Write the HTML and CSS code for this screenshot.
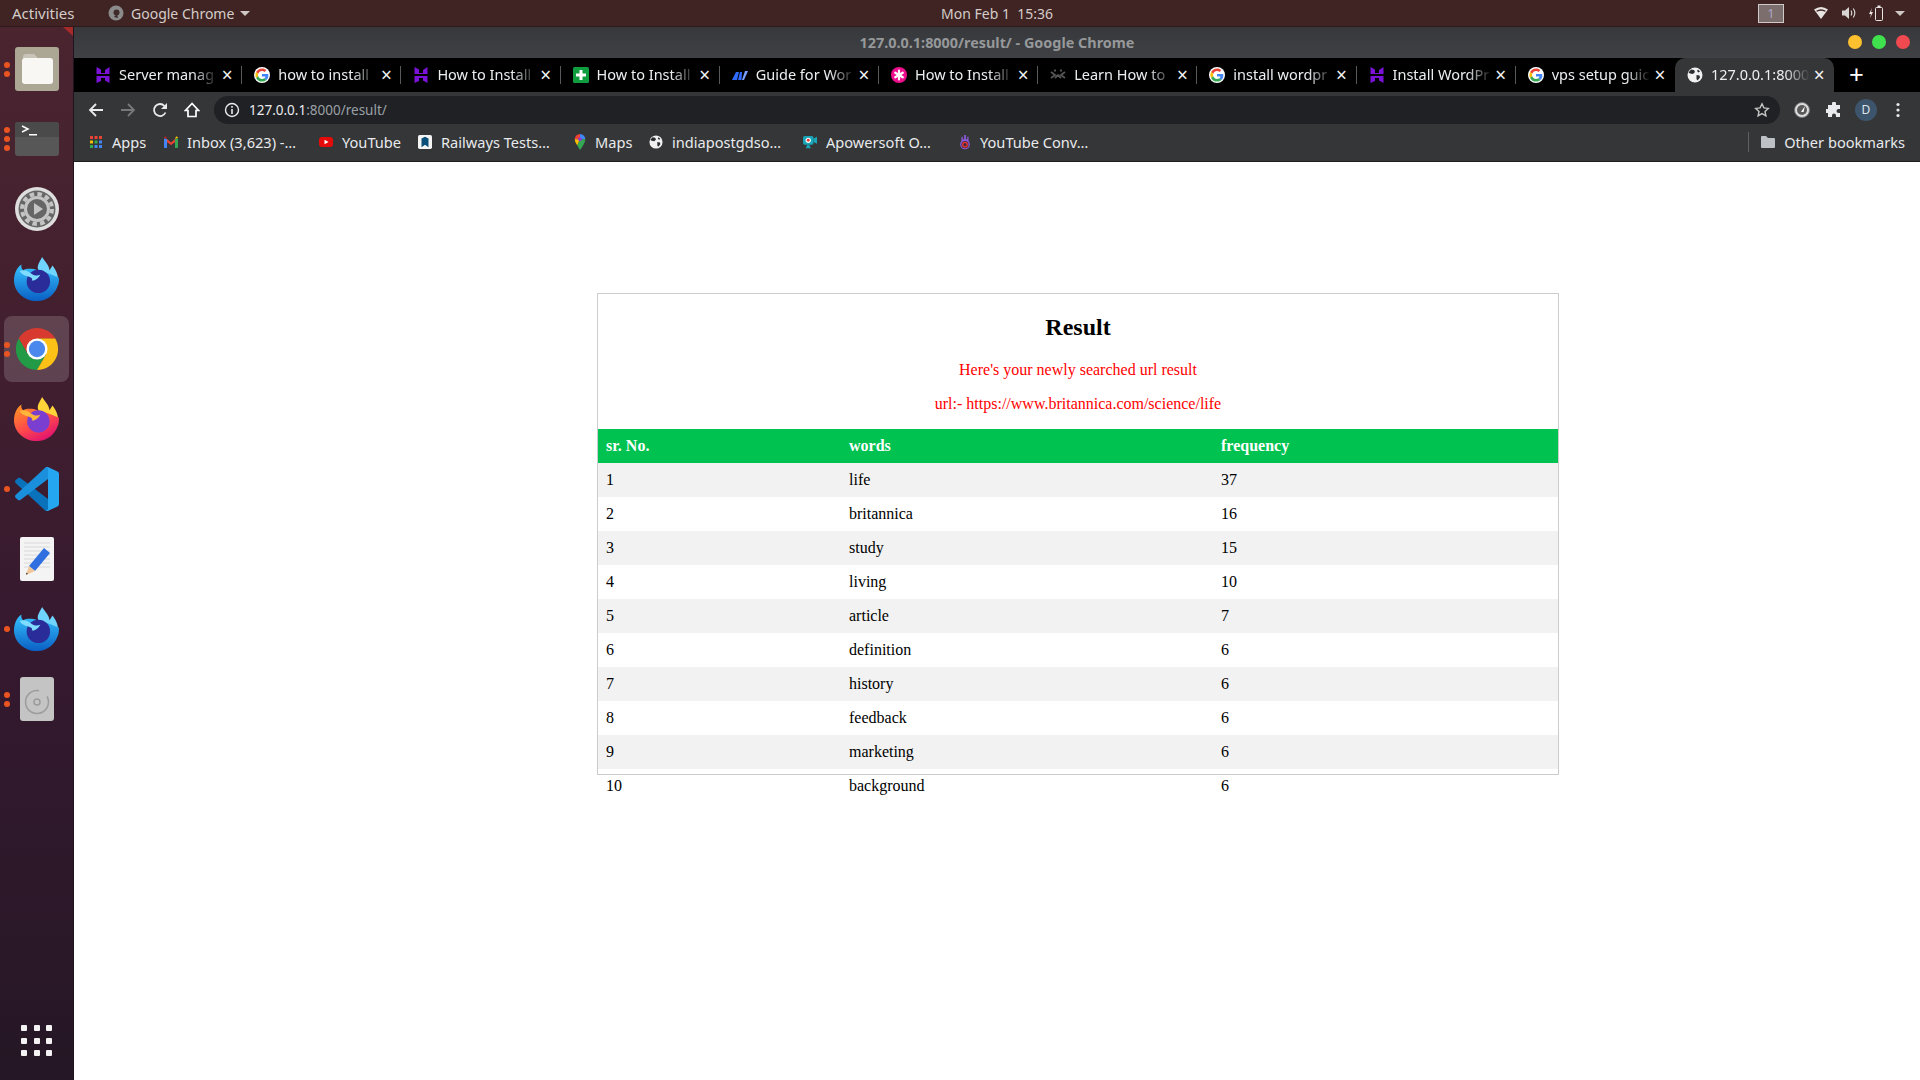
FILE: index.html
```html
<!DOCTYPE html>
<html lang="en">
<head>
<meta charset="utf-8">
<title>127.0.0.1:8000/result/ - Google Chrome</title>
<link rel="stylesheet" href="styles.css">
</head>
<body>
<svg class="defs" width="0" height="0" aria-hidden="true">
  <defs>
    <linearGradient id="tb" x1="0" y1="0" x2="0" y2="1"><stop offset="0" stop-color="#36c3ff"/><stop offset="1" stop-color="#0a5fc4"/></linearGradient>
    <linearGradient id="ff" x1="0" y1="0" x2="0.6" y2="1"><stop offset="0" stop-color="#ff9a1f"/><stop offset="0.6" stop-color="#ff4a4a"/><stop offset="1" stop-color="#e3156f"/></linearGradient>
    <symbol id="hostinger" viewBox="0 0 16 16"><path fill="#7a12d8" d="M1.500 0l4.500 2.500V6h4V3l4.500-3v7H1.500zM1.500 9h13v7L10 13.500V11H6v3l-4.500 2z"/></symbol>
    <symbol id="google" viewBox="-5 -5 58 58">
      <circle cx="24" cy="24" r="29" fill="#fff"/>
      <path fill="#ea4335" d="M24 9.500c3.540 0 6.710 1.220 9.210 3.600l6.850-6.850C35.900 2.380 30.470 0 24 0 14.620 0 6.510 5.380 2.560 13.220l7.980 6.190C12.430 13.720 17.740 9.500 24 9.500z"/>
      <path fill="#4285f4" d="M46.980 24.550c0-1.570-.15-3.090-.38-4.550H24v9.020h12.940c-.58 2.960-2.260 5.480-4.780 7.180l7.730 6c4.510-4.180 7.090-10.360 7.090-17.650z"/>
      <path fill="#fbbc05" d="M10.530 28.590c-.48-1.450-.76-2.990-.76-4.590s.27-3.140.76-4.590l-7.980-6.190C.92 16.460 0 20.120 0 24c0 3.880.92 7.540 2.560 10.780l7.970-6.190z"/>
      <path fill="#34a853" d="M24 48c6.480 0 11.930-2.130 15.890-5.810l-7.730-6c-2.150 1.450-4.920 2.300-8.160 2.300-6.260 0-11.570-4.220-13.470-9.910l-7.980 6.190C6.510 42.620 14.620 48 24 48z"/>
    </symbol>
    <symbol id="plus" viewBox="0 0 16 16"><rect width="16" height="16" rx="1.500" fill="#0f9d3f"/><path fill="#fff" d="M6.500 3h3v3.500H13v3H9.500V13h-3V9.500H3v-3h3.500z"/></symbol>
    <symbol id="wave" viewBox="0 0 16 16"><path fill="#2f6bff" d="M0 13L4 5h3L5 13zM6 13l2-8h2L9.500 13z"/><path fill="#7aa0ff" d="M10 13l3-9h3l-4 9z"/></symbol>
    <symbol id="star" viewBox="0 0 16 16"><circle cx="8" cy="8" r="8" fill="#ee0f8c"/><path stroke="#fff" stroke-width="2.200" stroke-linecap="round" d="M8 3.500v9M4.200 5.700l7.600 4.600M11.800 5.700l-7.600 4.600"/></symbol>
    <symbol id="xx" viewBox="0 0 16 16"><path stroke="#555" stroke-width="1.800" fill="none" d="M1 5l4 3-4 3M15 5l-4 3 4 3M5 11l3-3 3 3"/><path fill="#555" d="M4 2.500h2v2H4zM10 2.500h2v2h-2z"/></symbol>
    <symbol id="globe" viewBox="0 0 16 16"><circle cx="8" cy="8" r="7.500" fill="#f1f1f1"/><path fill="#2b2c2f" d="M4 2.500l3 .5 1 2-2 2-3-.5-1.500-1zM9.500 8l3 .5.500 2-2.500 3-1-1.500zM11 2.500l2 2-1.500 1L10 4z"/></symbol>
  </defs>
</svg>

<header class="topbar">
  <div class="top-left">
    <span class="activities">Activities</span>
    <span class="app-menu">
      <svg class="app-icon" viewBox="0 0 16 16"><circle cx="8" cy="8" r="7.500" fill="#8b8b8b"/><circle cx="8.500" cy="7.500" r="3" fill="#3f2a2a"/><path d="M6 12l3-3 1 4z" fill="#3f2a2a"/></svg>
      Google Chrome
      <i class="caret"></i>
    </span>
  </div>
  <div class="clock">Mon Feb 1&nbsp;&nbsp;15:36</div>
  <div class="tray">
    <span class="workspace">1</span>
    <svg class="tray-wifi" viewBox="0 0 16 14"><path fill="#e8e4e2" d="M1 3.500Q8-1.500 15 3.500L8 13z"/><path fill="#3f2424" d="M3.200 4.800Q8 1.800 12.800 4.800l-.8 1Q8 3.600 4 5.800z"/></svg>
    <svg class="tray-vol" viewBox="0 0 16 14"><path fill="#d8d4d2" d="M1 4.500h3l4-3.500v12L4 9.500H1z"/><path fill="none" stroke="#d8d4d2" stroke-width="1.200" d="M10 4.500q1.500 2.500 0 5M12.300 2.500q3 4.500 0 9"/></svg>
    <svg class="tray-bat" viewBox="0 0 16 16"><path fill="#e8e4e2" d="M3 3L0 9h2l-1 4 3-6H2z"/><rect x="6.500" y="2.500" width="7" height="13" rx="1" fill="none" stroke="#e8e4e2"/><rect x="8.500" y="0.500" width="3" height="2" fill="#e8e4e2"/></svg>
    <i class="caret tray-caret"></i>
  </div>
</header>

<div class="desktop">
  <nav class="dock">
    <span class="dock-notch"></span>
    <div class="dock-list">
      <div class="dock-item">
        <span class="pips"><i></i><i></i></span>
        <svg class="ico-44" viewBox="0 0 44 44"><rect width="44" height="44" rx="3" fill="#aca695"/><path fill="#c8c4b8" d="M8 10q0-3 3-3h8l4 4v6H8z"/><rect x="7" y="11" width="31" height="26" rx="3" fill="#f8f7f4"/></svg>
      </div>
      <div class="dock-item">
        <span class="pips"><i></i><i></i><i></i></span>
        <svg class="ico-term" viewBox="0 0 44 34"><rect width="44" height="34" rx="3" fill="#575757"/><path d="M3 0h38q3 0 3 3v12H0V3q0-3 3-3z" fill="#4a4a4a"/><path d="M7 4l6 3-6 3" fill="none" stroke="#fff" stroke-width="1.500"/><rect x="14" y="12" width="8" height="1.500" fill="#fff"/></svg>
      </div>
      <div class="dock-item">
        <svg class="ico-44" viewBox="0 0 44 44"><circle cx="22" cy="22" r="22" fill="#dedede"/><circle cx="22" cy="22" r="18.500" fill="#666"/><circle cx="22" cy="22" r="15" fill="none" stroke="#c4c4c4" stroke-width="4" stroke-dasharray="4.500 3.350"/><circle cx="22" cy="22" r="11.500" fill="#666" stroke="#c4c4c4" stroke-width="3"/><path d="M19 16l9 6-9 6z" fill="#c4c4c4"/></svg>
      </div>
      <div class="dock-item">
        <svg class="ico-45" viewBox="0 0 48 48">
          <path fill="#6fd4ff" d="M30 0C27 6 24 9 26 14L47 30C48 22 46 15 41 9 40 11 39 12 38 14 37 8 33 5 30 0z"/>
          <path fill="url(#tb)" d="M24 47C11 47 0 37 0 25 0 18 3 11 8 8c-.7 3 .3 5 2 6 3-2 10-2 15 0 8 2 14 4 23 8 0 15-11 25-24 25z"/>
          <circle cx="26" cy="26" r="12.500" fill="#2a2c99"/>
          <path fill="#7fdcff" d="M6 15c5-2 9 0 13 3 3 2 6 2 9 1-2 4-6 7-9 6 1-2 0-3-3-4-4-1-8-2-10-6z"/>
        </svg>
      </div>
      <div class="dock-item is-active">
        <span class="pips"><i></i><i></i></span>
        <svg class="ico-46" viewBox="0 0 48 48">
          <path fill="#d93a2f" d="M4.950 13A22 22 0 0 1 43.050 13H24L14.500 29.500z"/>
          <path fill="#229a46" d="M4.950 13A22 22 0 0 0 24 46L33.500 29.500H14.500z"/>
          <path fill="#fbc117" d="M43.050 13H24L33.500 29.500 24 46A22 22 0 0 0 43.050 13z"/>
          <circle cx="24" cy="24" r="11" fill="#fff"/><circle cx="24" cy="24" r="8.500" fill="#4a88ee"/>
        </svg>
      </div>
      <div class="dock-item">
        <svg class="ico-45" viewBox="0 0 48 48">
          <path fill="#ffd53a" d="M30 0C27 6 24 9 26 14L47 30C48 22 46 15 41 9 40 11 39 12 38 14 37 8 33 5 30 0z"/>
          <path fill="url(#ff)" d="M24 47C11 47 0 37 0 25 0 18 3 11 8 8c-.7 3 .3 5 2 6 3-2 10-2 15 0 8 2 14 4 23 8 0 15-11 25-24 25z"/>
          <circle cx="26" cy="26" r="12" fill="#7a3fd0"/>
          <path fill="#ffb43a" d="M6 15c5-2 9 0 13 3 3 2 6 2 9 1-2 4-6 7-9 6 1-2 0-3-3-4-4-1-8-2-10-6z"/>
        </svg>
      </div>
      <div class="dock-item">
        <span class="pips"><i></i></span>
        <svg class="ico-44" viewBox="0 0 100 100">
          <path fill="#0a72ba" d="M1.400 30.300l5.500-5.100c1.500-1.300 3.700-1.400 5.300-.2L75 72.700V99.800c-2.400 1-5 .6-7-1.300L1.400 36.300c-1.800-1.600-1.800-4.400 0-6z"/>
          <path fill="#1a8fdc" d="M1.400 69.700l5.500 5.100c1.500 1.300 3.700 1.400 5.300.2L75 27.300V.2C72.600-.8 70 .3 68 2L1.400 63.700c-1.800 1.600-1.800 4.400 0 6z"/>
          <path fill="#24a6f0" d="M71 99.500c1.700.7 3.400.6 5-.1l20.500-9.900c2.200-1 3.500-3.100 3.500-5.500V16c0-2.400-1.400-4.500-3.500-5.500L76 .6C74.400-.1 72.700-.2 71 .5 73.600 1.500 75 3 75 6v88c0 3-1.400 4.500-4 5.500z"/>
        </svg>
      </div>
      <div class="dock-item">
        <svg class="ico-doc" viewBox="0 0 34 44"><rect width="34" height="44" rx="2" fill="#f4f4f4"/><path stroke="#d8d8d8" d="M4 6h26M4 10h26M4 14h26M4 18h26M4 22h26M4 26h26M4 30h26"/><path fill="#2f6fe0" d="M24 11l6 5-15 18-6-5z"/><path fill="#f1c79a" d="M9 29l6 5-9 4z"/><path fill="#333" d="M6.500 35.500l1.500 1.300-2 1z"/></svg>
      </div>
      <div class="dock-item">
        <span class="pips"><i></i></span>
        <svg class="ico-45" viewBox="0 0 48 48">
          <path fill="#6fd4ff" d="M30 0C27 6 24 9 26 14L47 30C48 22 46 15 41 9 40 11 39 12 38 14 37 8 33 5 30 0z"/>
          <path fill="url(#tb)" d="M24 47C11 47 0 37 0 25 0 18 3 11 8 8c-.7 3 .3 5 2 6 3-2 10-2 15 0 8 2 14 4 23 8 0 15-11 25-24 25z"/>
          <circle cx="26" cy="26" r="12.500" fill="#2a2c99"/>
          <path fill="#7fdcff" d="M6 15c5-2 9 0 13 3 3 2 6 2 9 1-2 4-6 7-9 6 1-2 0-3-3-4-4-1-8-2-10-6z"/>
        </svg>
      </div>
      <div class="dock-item">
        <span class="pips"><i></i><i></i></span>
        <svg class="ico-doc" viewBox="0 0 34 44"><rect width="34" height="44" rx="3" fill="#c4c4c4"/><circle cx="17" cy="25" r="11.500" fill="none" stroke="#9c9c9c" stroke-width="1.500" stroke-dasharray="56 10"/><circle cx="17" cy="25" r="3" fill="none" stroke="#9c9c9c" stroke-width="1.500"/></svg>
      </div>
    </div>
    <div class="app-grid"><i></i><i></i><i></i><i></i><i></i><i></i><i></i><i></i><i></i></div>
  </nav>

  <div class="browser">
    <div class="titlebar">
      <span class="win-title">127.0.0.1:8000/result/ - Google Chrome</span>
      <span class="win-controls"><i class="wc wc-y"></i><i class="wc wc-g"></i><i class="wc wc-r"></i></span>
    </div>

    <div class="tabstrip">
      <div class="tab"><svg class="fav"><use href="#hostinger"/></svg><span class="tab-title">Server manag</span><span class="tab-x">×</span></div>
      <div class="tab"><svg class="fav"><use href="#google"/></svg><span class="tab-title">how to install</span><span class="tab-x">×</span></div>
      <div class="tab"><svg class="fav"><use href="#hostinger"/></svg><span class="tab-title">How to Install</span><span class="tab-x">×</span></div>
      <div class="tab"><svg class="fav"><use href="#plus"/></svg><span class="tab-title">How to Install</span><span class="tab-x">×</span></div>
      <div class="tab"><svg class="fav"><use href="#wave"/></svg><span class="tab-title">Guide for Wor</span><span class="tab-x">×</span></div>
      <div class="tab"><svg class="fav"><use href="#star"/></svg><span class="tab-title">How to Install</span><span class="tab-x">×</span></div>
      <div class="tab"><svg class="fav"><use href="#xx"/></svg><span class="tab-title">Learn How to</span><span class="tab-x">×</span></div>
      <div class="tab"><svg class="fav"><use href="#google"/></svg><span class="tab-title">install wordpr</span><span class="tab-x">×</span></div>
      <div class="tab"><svg class="fav"><use href="#hostinger"/></svg><span class="tab-title">Install WordPr</span><span class="tab-x">×</span></div>
      <div class="tab tab-prev"><svg class="fav"><use href="#google"/></svg><span class="tab-title">vps setup guic</span><span class="tab-x">×</span></div>
      <div class="tab tab-active"><svg class="fav"><use href="#globe"/></svg><span class="tab-title">127.0.0.1:8000</span><span class="tab-x">×</span></div>
      <span class="new-tab">+</span>
    </div>

    <div class="toolbar">
      <div class="nav-btns">
        <svg class="tool" viewBox="0 0 16 16"><path fill="none" stroke="#e8eaed" stroke-width="1.800" d="M15 8H2M8 2L2 8l6 6"/></svg>
        <svg class="tool" viewBox="0 0 16 16"><path fill="none" stroke="#77787a" stroke-width="1.800" d="M1 8h13M8 2l6 6-6 6"/></svg>
        <svg class="tool" viewBox="0 0 16 16"><path fill="none" stroke="#e8eaed" stroke-width="1.800" d="M13.500 10.500A6 6 0 1 1 12.500 4"/><path fill="#e8eaed" d="M15 1v6H9z"/></svg>
        <svg class="tool" viewBox="0 0 16 16"><path fill="none" stroke="#fff" stroke-width="1.700" d="M8 1.500L1.500 8.500h2.500V14.500h8V8.500h2.500z"/></svg>
      </div>
      <div class="omnibox">
        <svg class="omni-info" viewBox="0 0 16 16"><circle cx="8" cy="8" r="6.500" fill="none" stroke="#e8eaed" stroke-width="1.400"/><path stroke="#e8eaed" stroke-width="1.600" d="M8 7v5M8 4v1.800"/></svg>
        <span class="url"><b>127.0.0.1</b>:8000/result/</span>
        <svg class="omni-star" viewBox="0 0 16 16"><path fill="none" stroke="#c4c7c5" stroke-width="1.400" d="M8 1.800l1.900 4.100 4.400.5-3.300 3 .9 4.400L8 11.600l-3.900 2.200.9-4.400-3.300-3 4.400-.5z"/></svg>
      </div>
      <div class="ext-btns">
        <svg class="tool" viewBox="0 0 16 16"><circle cx="8" cy="8" r="7.500" fill="#dcdcdc" stroke="#777"/><circle cx="8" cy="8" r="5" fill="#5b5b5b"/><path d="M7 10l4-6-1.500 6z" fill="#fff"/></svg>
        <svg class="tool" viewBox="0 0 16 16"><path fill="#e8eaed" d="M6 1.500a2 2 0 0 1 4 0V3h4v4h-1.500a2 2 0 0 0 0 4H14v4H10v-1.500a2 2 0 0 0-4 0V15H2v-4H.5a2 2 0 0 1 0-4H2V3h4z"/></svg>
        <span class="avatar">D</span>
        <svg class="tool" viewBox="0 0 16 16"><circle cx="8" cy="2.500" r="1.600" fill="#e8eaed"/><circle cx="8" cy="8" r="1.600" fill="#e8eaed"/><circle cx="8" cy="13.500" r="1.600" fill="#e8eaed"/></svg>
      </div>
    </div>

    <div class="bookmarks">
      <div class="bm bm-apps"><svg class="bm-ico" viewBox="0 0 14 14"><path fill="#ea4335" d="M1 1h3v3H1zM5.500 1h3v3h-3zM10 1h3v3h-3z"/><path fill="#fbbc05" d="M1 5.500h3v3H1z"/><path fill="#34a853" d="M5.500 5.500h3v3h-3zM1 10h3v3H1z"/><path fill="#4285f4" d="M10 5.500h3v3h-3zM5.500 10h3v3h-3zM10 10h3v3h-3z"/></svg>Apps</div>
      <div class="bm bm-inbox"><svg class="bm-ico" viewBox="0 0 14 12"><path fill="#ea4335" d="M3 3L7 6.500 11 3 12 5.500 7 9 2 5.500z"/><path fill="#4285f4" d="M0 2.500L3 3v9H1q-1 0-1-1z"/><path fill="#34a853" d="M14 2.500L11 3v9h2q1 0 1-1z"/><path fill="#fbbc05" d="M11 3l3-1q0-2-2-1.500z"/><path fill="#c5221f" d="M3 3L0 2q0-2 2-1.500z"/></svg>Inbox (3,623) -…</div>
      <div class="bm bm-yt"><svg class="bm-ico" viewBox="0 0 14 12"><rect y="1" width="14" height="10" rx="3" fill="#e60b0b"/><path fill="#fff" d="M5.500 3.800L9.500 6l-4 2.200z"/></svg>YouTube</div>
      <div class="bm bm-rail"><svg class="bm-ico" viewBox="0 0 16 16"><rect width="16" height="16" rx="2" fill="#f4f4f4"/><path fill="#0a4f7a" d="M4 14V4l4-2 4 2v10l-4-3z"/></svg>Railways Tests…</div>
      <div class="bm bm-maps"><svg class="bm-ico-sm" viewBox="0 0 12 18"><path fill="#4285f4" d="M6 0a6 6 0 0 1 6 6L6 6z"/><path fill="#ea4335" d="M6 0a6 6 0 0 0-6 6l6 0z"/><path fill="#fbbc05" d="M0 6q0 3 3 7l3-7z"/><path fill="#34a853" d="M12 6q0 4-6 12l-3-5 3-7z"/><circle cx="6" cy="6" r="2.200" fill="#8e3bd0"/></svg>Maps</div>
      <div class="bm bm-post"><svg class="bm-ico"><use href="#globe"/></svg>indiapostgdso…</div>
      <div class="bm bm-apow"><svg class="bm-ico" viewBox="0 0 16 16"><rect x="0" y="1" width="12" height="10" rx="2" fill="#18a5b8"/><path fill="#18a5b8" d="M12 4l4-2v8l-4-2zM5 11h2l2 4H3z"/><circle cx="6" cy="6" r="3" fill="#fff"/><circle cx="6" cy="6" r="1.600" fill="#e33"/></svg>Apowersoft O…</div>
      <div class="bm bm-conv"><svg class="bm-ico-sm" viewBox="0 0 12 18"><path fill="#8a5ad8" d="M2 8V3h1.500v3H5V1h2v5h1.500V3H10v5a5.500 5.500 0 1 1-8 0z"/><circle cx="6" cy="12" r="4" fill="#3a2a3a"/><circle cx="6" cy="12" r="2.500" fill="none" stroke="#e33" stroke-width="1.500"/></svg>YouTube Conv…</div>
      <div class="bm-other"><span class="bm-sep"></span><svg class="bm-ico" viewBox="0 0 14 12"><path fill="#bdc1c6" d="M0 1q0-1 1-1h4l2 2h6q1 0 1 1v8q0 1-1 1H1q-1 0-1-1z"/></svg>Other bookmarks</div>
    </div>

    <main class="page">
      <section class="card">
        <h2>Result</h2>
        <p>Here's your newly searched url result</p>
        <p>url:- https://www.britannica.com/science/life</p>
        <table>
          <thead>
            <tr><th class="col-a">sr. No.</th><th class="col-b">words</th><th>frequency</th></tr>
          </thead>
          <tbody>
            <tr><td>1</td><td>life</td><td>37</td></tr>
            <tr><td>2</td><td>britannica</td><td>16</td></tr>
            <tr><td>3</td><td>study</td><td>15</td></tr>
            <tr><td>4</td><td>living</td><td>10</td></tr>
            <tr><td>5</td><td>article</td><td>7</td></tr>
            <tr><td>6</td><td>definition</td><td>6</td></tr>
            <tr><td>7</td><td>history</td><td>6</td></tr>
            <tr><td>8</td><td>feedback</td><td>6</td></tr>
            <tr><td>9</td><td>marketing</td><td>6</td></tr>
            <tr><td>10</td><td>background</td><td>6</td></tr>
          </tbody>
        </table>
      </section>
    </main>
  </div>
</div>
</body>
</html>
```
FILE: styles.css
```css
* { box-sizing: border-box; }
html, body { margin: 0; height: 100%; }
body { width: 1920px; height: 1080px; overflow: hidden; display: flex; flex-direction: column; font-family: "Noto Sans", sans-serif; background: #fff; }
.defs { position: absolute; }

.topbar { height: 27px; flex: none; background: #3f2423; color: #d4ccc8; font-size: 14px; display: flex; align-items: center; border-bottom: 1px solid #2e1a1a; }
.top-left { width: 941px; display: flex; align-items: center; padding-left: 12px; flex: none; }
.activities { width: 96px; font-size: 15px; }
.app-menu { display: flex; align-items: center; gap: 6px; }
.app-icon { width: 16px; height: 16px; margin-right: 1px; }
.caret { display: inline-block; width: 0; height: 0; border-left: 5px solid transparent; border-right: 5px solid transparent; border-top: 5px solid #cfc8c4; }
.clock { width: 112px; text-align: center; white-space: nowrap; flex: none; font-size: 14px; }
.tray { flex: 1; display: flex; align-items: center; padding-left: 705px; }
.workspace { width: 26px; height: 19px; background: #7d6e6e; border: 1px solid #cfcaca; color: #a7a7c0; font-size: 13px; text-align: center; line-height: 17px; flex: none; }
.tray-wifi { width: 16px; height: 14px; margin-left: 29px; flex: none; }
.tray-vol { width: 16px; height: 14px; margin-left: 12px; flex: none; }
.tray-bat { width: 16px; height: 16px; margin-left: 12px; flex: none; }
.tray-caret { margin-left: 10px; flex: none; }

.desktop { flex: 1; display: flex; min-height: 0; }

.dock { width: 74px; flex: none; position: relative; background: linear-gradient(180deg, #4a2530 0%, #44202f 25%, #35192f 60%, #251725 100%); border-right: 1px solid #1e1420; display: flex; flex-direction: column; justify-content: space-between; padding: 7px 0 24px; }
.dock-notch { position: absolute; right: 0; top: 0; width: 0; height: 0; border-top: 9px solid #a52a2a; border-left: 10px solid transparent; }
.dock-item { height: 70px; display: flex; align-items: center; justify-content: center; position: relative; }
.is-active::before { content: ""; position: absolute; left: 4px; right: 4px; top: 2px; bottom: 2px; background: rgba(255,255,255,.16); border-radius: 8px; }
.pips { position: absolute; left: 4px; top: 0; bottom: 0; display: flex; flex-direction: column; justify-content: center; gap: 3px; z-index: 1; }
.pips i { display: block; width: 6px; height: 6px; border-radius: 50%; background: #e95420; }
.ico-44 { width: 44px; height: 44px; position: relative; }
.ico-45 { width: 45px; height: 45px; position: relative; }
.ico-46 { width: 46px; height: 46px; position: relative; }
.ico-term { width: 44px; height: 34px; }
.ico-doc { width: 34px; height: 44px; }
.app-grid { display: grid; grid-template-columns: repeat(3, 6px); gap: 6.500px; justify-content: center; }
.app-grid i { display: block; width: 6px; height: 6px; background: #f4f2f2; border-radius: 1px; }

.browser { flex: 1; min-width: 0; display: flex; flex-direction: column; }
.titlebar { height: 31px; flex: none; background: linear-gradient(180deg, #36383b, #3f4145); display: flex; align-items: center; justify-content: center; position: relative; }
.win-title { font-size: 14.400px; font-weight: 700; color: #96989a; }
.win-controls { position: absolute; right: 10px; top: 8px; display: flex; gap: 10px; }
.wc { display: block; width: 14px; height: 14px; border-radius: 50%; }
.wc-y { background: #fdc12f; }
.wc-g { background: #3fe24c; }
.wc-r { background: #f0494f; }

.tabstrip { height: 34px; flex: none; background: #000; display: flex; align-items: stretch; padding-left: 9px; }
.tab { width: 159.200px; flex: none; display: flex; align-items: center; padding: 0 7px 0 12px; color: #eceef0; font-size: 14.500px; position: relative; }
.tab::after { content: ""; position: absolute; right: 0; top: 8px; bottom: 8px; width: 1px; background: #58595c; }
.tab-prev::after, .tab-active::after { display: none; }
.tab-active { background: #353637; border-radius: 10px 10px 0 0; }
.fav { width: 16px; height: 16px; flex: none; }
.tab-title { flex: 1; min-width: 0; margin-left: 8px; padding-bottom: 2px; white-space: nowrap; overflow: hidden; -webkit-mask-image: linear-gradient(90deg, #000 75%, transparent 100%); mask-image: linear-gradient(90deg, #000 75%, transparent 100%); }
.tab-x { width: 16px; flex: none; margin-left: 1px; text-align: center; font-size: 19px; line-height: 18px; color: #f1f3f4; }
.new-tab { margin-left: 15px; color: #fff; font-size: 26px; line-height: 32px; font-weight: 400; }

.toolbar { height: 32px; flex: none; background: #353637; display: flex; align-items: flex-end; }
.nav-btns { width: 140px; height: 28px; flex: none; display: flex; align-items: center; gap: 16px; padding-left: 14px; }
.tool { width: 16px; height: 16px; flex: none; }
.omnibox { width: 1566px; height: 28px; flex: none; background: #202124; border-radius: 14px; display: flex; align-items: center; padding: 0 10px 0 10px; }
.omni-info { width: 16px; height: 16px; flex: none; }
.url { flex: 1; margin-left: 9px; padding-bottom: 1px; font-size: 13.500px; color: #9aa0a6; white-space: nowrap; }
.url b { font-weight: 400; color: #e8eaed; }
.omni-star { width: 16px; height: 16px; flex: none; }
.ext-btns { flex: 1; height: 28px; display: flex; align-items: center; gap: 16px; padding-left: 14px; }
.avatar { width: 22px; height: 22px; margin: 0 -3px; flex: none; border-radius: 50%; background: #3d556c; color: #dfe5ea; font-size: 12px; line-height: 22px; text-align: center; }

.bookmarks { height: 38px; flex: none; background: #353637; border-bottom: 1px solid #1e1e1e; display: flex; align-items: center; color: #e8eaed; font-size: 14.600px; padding: 0 0 2px 15px; }
.bm { flex: none; display: flex; align-items: center; white-space: nowrap; gap: 9px; }
.bm-ico { width: 14px; height: 14px; flex: none; }
.bm-ico-sm { width: 12px; height: 16px; flex: none; }
.bm-apps { width: 75px; }
.bm-inbox { width: 155px; }
.bm-yt { width: 99px; }
.bm-rail { width: 156px; }
.bm-maps { width: 75px; }
.bm-post { width: 154px; }
.bm-apow { width: 156px; }
.bm-conv { width: 133px; }
.bm-other { margin-left: auto; display: flex; align-items: center; gap: 9px; padding-right: 15px; white-space: nowrap; }
.bm-sep { width: 1px; height: 20px; background: #5f6063; margin-right: 3px; }

.page { flex: 1; min-height: 0; background: #fff; padding: 131px 0 0 523px; }
.card { width: 962px; height: 482px; border: 1px solid #ccc; font-family: "Liberation Serif", serif; font-size: 16px; color: #000; text-align: center; }
.card h2 { font-size: 24px; font-weight: 700; margin: 19.920px 0; }
.card p { margin: 16px 0; color: #f00; }
table { width: 960px; border-collapse: collapse; table-layout: fixed; text-align: left; }
th, td { padding: 8px; height: 34px; }
th { background: #00c250; color: #fff; font-weight: 700; }
.col-a { width: 243px; }
.col-b { width: 372px; }
tbody tr:nth-child(odd) { background: #f2f2f2; }
tbody tr:last-child { background: transparent; }
```
